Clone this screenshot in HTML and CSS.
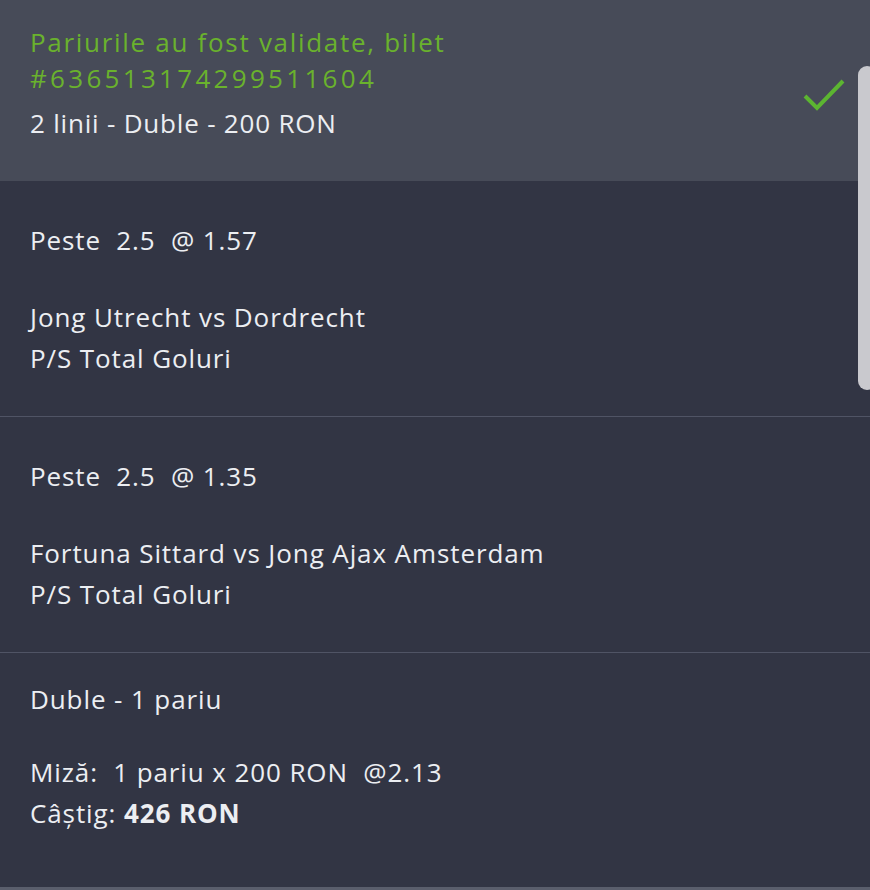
FILE: index.html
```html
<!DOCTYPE html>
<html lang="ro">
<head>
  <meta charset="UTF-8">
  <meta name="viewport" content="width=device-width, initial-scale=1.0">
  <title>Bilet</title>
  <link rel="stylesheet" href="styles.css">
</head>
<body>

  <div class="ticket">
    <!-- antet cu confirmarea -->
    <div class="ticket-header">
      <div class="header-text">
        <p class="validated">Pariurile au fost validate, bilet<br><span class="ticket-id">#636513174299511604</span></p>
        <p class="summary">2 linii - Duble - 200 RON</p>
      </div>
      <svg class="check" width="44" height="34" viewBox="0 0 44 34">
        <path d="M3 18 L15 30 L41 3" fill="none" stroke="#5cb531" stroke-width="4"/>
      </svg>
    </div>

    <div class="bet">
      <p class="pick">Peste&nbsp; 2.5&nbsp; @ 1.57</p>
      <p class="match">Jong Utrecht vs Dordrecht<br>P/S Total Goluri</p>
    </div>

    <div class="bet">
      <p class="pick">Peste&nbsp; 2.5&nbsp; @ 1.35</p>
      <p class="match">Fortuna Sittard vs Jong Ajax Amsterdam<br>P/S Total Goluri</p>
    </div>

    <div class="bet total">
      <p class="pick">Duble - 1 pariu</p>
      <p class="match">Miză:&nbsp; 1 pariu x 200 RON&nbsp; @2.13<br>Câștig: <b>426 RON</b></p>
    </div>

    <div class="scrollbar"></div>
  </div>

</body>
</html>
```

FILE: styles.css
```css
body {
  margin: 0;
  background-color: #323544;
  font-family: "Open Sans", "Noto Sans", sans-serif;
  color: #eceef2;
}

.ticket {
  position: relative;
  width: 870px;
  height: 890px;
  overflow: hidden;
  background-color: #323544;
  border-bottom: 3px solid #5a5e6c;
  box-sizing: border-box;
}

p {
  margin: 0;
}

.ticket-header {
  display: flex;
  justify-content: space-between;
  align-items: flex-start;
  height: 181px;
  box-sizing: border-box;
  padding: 24px 24px 0 30px;
  background-color: #474b58;
}

.validated {
  color: #6ab22d;
  font-size: 26px;
  line-height: 36px;
  letter-spacing: 1.7px;
}

.ticket-id {
  letter-spacing: 3.3px;
}

.summary {
  margin-top: 9px;
  font-size: 26px;
  line-height: 36px;
  letter-spacing: 0.8px;
}

.check {
  margin-top: 54px;
}

.bet {
  padding: 39px 30px 37px;
  border-bottom: 1px solid #505465;
  font-size: 26px;
  line-height: 41px;
  letter-spacing: 0.9px;
}

.bet .match {
  margin-top: 36px;
}

.bet.total {
  padding-top: 26px;
  border-bottom: none;
}

.bet.total .match {
  margin-top: 32px;
}

.bet b {
  font-weight: bold;
}

/* bara de scroll din dreapta */
.scrollbar {
  position: absolute;
  top: 66px;
  right: -6px;
  width: 18px;
  height: 324px;
  border-radius: 9px;
  background-color: #c9c9ce;
}
```
